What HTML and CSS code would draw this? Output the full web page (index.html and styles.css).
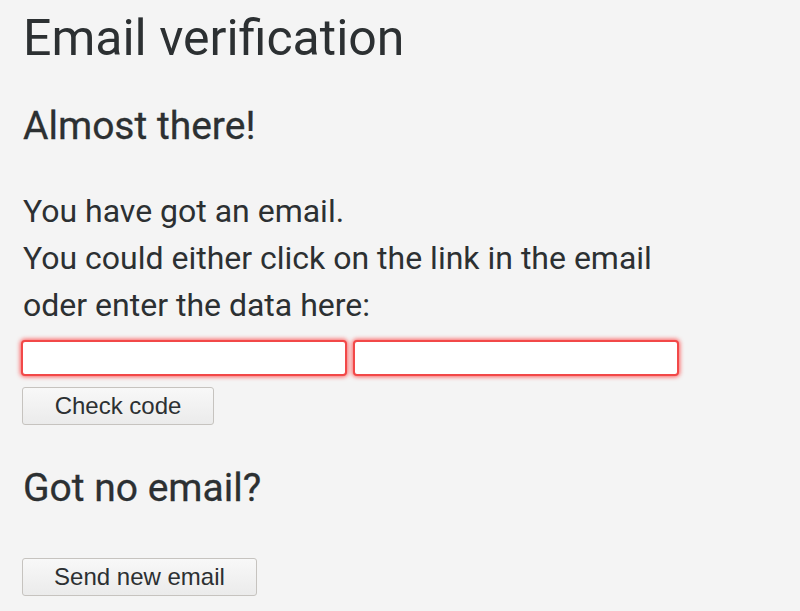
FILE: index.html
```html
<!DOCTYPE html>
<html>
<head>
<meta charset="utf-8">
<link rel="stylesheet" href="styles.css">
</head>
<body>
<main class="page">
  <h1 class="title">Email verification</h1>
  <h2 class="subtitle">Almost there!</h2>
  <p class="text">You have got an email.<br>You could either click on the link in the email<br>oder enter the data here:</p>
  <form class="form">
    <div class="fields">
      <input class="field" type="text">
      <input class="field" type="text">
    </div>
    <button class="btn btn-check" type="button">Check code</button>
  </form>
  <h2 class="subtitle subtitle-second">Got no email?</h2>
  <button class="btn btn-send" type="button">Send new email</button>
</main>
</body>
</html>
```
FILE: styles.css
```css
html, body {
  margin: 0;
  padding: 0;
  background: #f4f4f4;
}
body {
  font-family: Roboto, "Noto Sans", sans-serif;
  color: #2c3032;
}
.page {
  padding: 0 0 0 23px;
}
.title {
  margin: 0;
  padding-top: 9px;
  font-size: 50px;
  font-weight: 400;
  line-height: 58px;
}
.subtitle {
  margin: 37px 0 0;
  font-size: 39px;
  font-weight: 400;
  line-height: 44px;
  -webkit-text-stroke: 0.3px #2c3032;
}
.text {
  margin: 40px 0 0;
  font-size: 32px;
  line-height: 47px;
}
.form {
  margin: 0;
}
.fields {
  display: flex;
  gap: 6px;
  margin-left: -2px;
  margin-top: 11px;
}
.field {
  box-sizing: border-box;
  width: 326px;
  height: 36px;
  margin: 0;
  border: 2px solid #f24848;
  border-radius: 4px;
  background: #fff;
  box-shadow: 0 0 4px 1px rgba(255, 50, 50, 0.75);
  outline: none;
}
.btn {
  display: block;
  box-sizing: border-box;
  height: 38px;
  margin: 0;
  padding: 0;
  border: 1px solid #c6c3bf;
  border-radius: 3px;
  background: linear-gradient(#f8f8f8, #ebebeb);
  font-family: "Liberation Sans", Arial, sans-serif;
  font-size: 24px;
  color: #2c3032;
  margin-left: -1px;
}
.btn-check {
  width: 192px;
  margin-top: 11px;
}
.btn-send {
  width: 235px;
  margin-top: 48px;
}
.subtitle-second {
  margin-top: 41px;
}
```
